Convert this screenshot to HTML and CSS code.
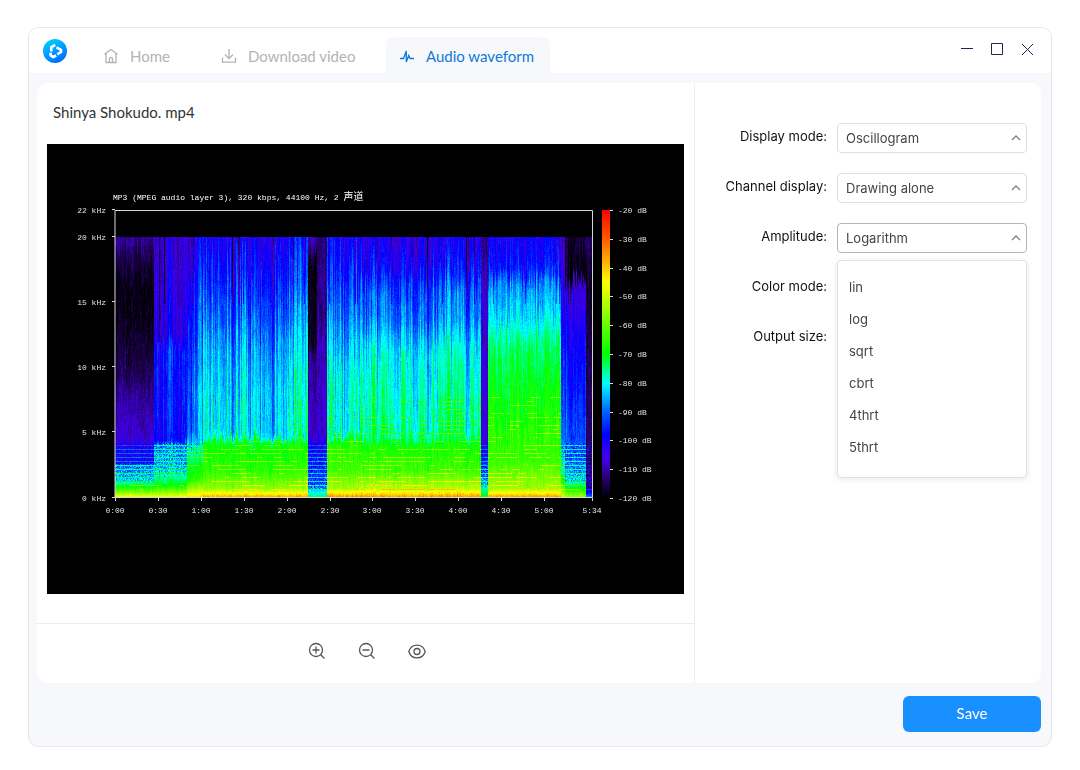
FILE: index.html
```html
<!DOCTYPE html>
<html lang="en">
<head>
<meta charset="utf-8">
<title>Audio waveform</title>
<link rel="stylesheet" href="styles.css">
</head>
<body>
<div class="window">
  <header class="titlebar">
    <svg class="logo" viewBox="0 0 24 24" aria-hidden="true">
      <defs><linearGradient id="logo-fill" x1="0.2" y1="0" x2="0.7" y2="1"><stop offset="0" stop-color="#00d2ff"/><stop offset="1" stop-color="#0068ff"/></linearGradient></defs>
      <circle cx="12" cy="12" r="12" fill="url(#logo-fill)"/>
      <g stroke="#fff" stroke-width="2.6" stroke-linejoin="round">
        <path d="M12.200 5.800 8.300 8.200V12.500"/>
        <path d="M13.500 8.300 18 10.800V13L14.300 15.300"/>
        <path d="M7.600 13.800V16.500L10.200 18.200 13.200 16.500"/>
      </g>
    </svg>
    <nav class="tabs">
      <a class="tab tab-home" href="#">
        <svg viewBox="0 0 16 16"><path d="M1.500 6.300 8 1.500l6.500 4.800M3 5.500V14.500H13V5.500M6.500 14.500V10.500Q6.500 9.500 8 9.500T9.500 10.500V14.500"/></svg>
        Home
      </a>
      <a class="tab tab-download" href="#">
        <svg viewBox="0 0 16 16"><path d="M8 1V10.500M4 6.500 8 10.500 12 6.500M1.500 9.500V14.200H14.500V9.500"/></svg>
        Download video
      </a>
      <a class="tab tab-active" href="#" aria-current="page">
        <svg viewBox="0 0 16 16"><path d="M1 10.500H4.500L7.300 3V14L9.700 7.500 11 10.500H15"/></svg>
        Audio waveform
      </a>
    </nav>
    <div class="window-controls">
      <button type="button" aria-label="Minimize"><svg viewBox="0 0 14 14"><path d="M1 6.500H13"/></svg></button>
      <button type="button" aria-label="Maximize"><svg viewBox="0 0 14 14"><path d="M1.500 1.500H12.500V12.500H1.500Z"/></svg></button>
      <button type="button" aria-label="Close"><svg viewBox="0 0 14 14"><path d="M2 2 13 13M13 2 2 13"/></svg></button>
    </div>
  </header>

  <main class="panel">
    <section class="preview">
      <h1 class="file-name">Shinya Shokudo. mp4</h1>
      <div class="stage">
        <canvas id="spectrogram" width="637" height="450"></canvas>
        <svg id="axes" viewBox="0 0 637 450">
          <defs><linearGradient id="scale" x1="0" y1="0" x2="0" y2="1">
            <stop offset="0" stop-color="#f00"/><stop offset="0.1" stop-color="#ff5a00"/><stop offset="0.2" stop-color="#ffc800"/><stop offset="0.25" stop-color="#ff0"/><stop offset="0.5" stop-color="#0f0"/><stop offset="0.6" stop-color="#0ff"/><stop offset="0.7" stop-color="#0064ff"/><stop offset="0.78" stop-color="#00f"/><stop offset="0.86" stop-color="#4600f0"/><stop offset="0.93" stop-color="#280070"/><stop offset="1" stop-color="#000"/>
          </linearGradient></defs>
          <rect x="555" y="66" width="8" height="288" fill="url(#scale)"/>
          <path class="frame" d="M68 66.500H545.500V353.500H68Z"/>
          <text class="caption" x="66" y="56">MP3 (MPEG audio layer 3), 320 kbps, 44100 Hz, 2 <tspan class="cjk">声道</tspan></text>
        </svg>
      </div>
      <div class="tools">
        <button type="button" aria-label="Zoom in"><svg viewBox="0 0 18 18"><circle cx="8" cy="8" r="6.500"/><path d="M12.700 12.700 16.500 16.500M4.500 8H11.500M8 4.500V11.500"/></svg></button>
        <button type="button" aria-label="Zoom out"><svg viewBox="0 0 18 18"><circle cx="8" cy="8" r="6.500"/><path d="M12.700 12.700 16.500 16.500M4.500 8H11.500"/></svg></button>
        <button type="button" aria-label="Preview"><svg viewBox="0 0 18 18"><path d="M.8 9.500C3.500 1 14.500 1 17.200 9.500C14.500 18 3.500 18 .8 9.500Z"/><circle cx="9" cy="9.500" r="3"/></svg></button>
      </div>
    </section>

    <form class="settings">
      <div class="field">
        <label for="display-mode">Display mode:</label>
        <div class="select"><select id="display-mode"><option>Oscillogram</option></select><svg viewBox="0 0 10 6"><path d="M1 5 5 1 9 5"/></svg></div>
      </div>
      <div class="field">
        <label for="channel">Channel display:</label>
        <div class="select"><select id="channel"><option>Drawing alone</option></select><svg viewBox="0 0 10 6"><path d="M1 5 5 1 9 5"/></svg></div>
      </div>
      <div class="field">
        <label for="amplitude">Amplitude:</label>
        <div class="select select-open"><select id="amplitude"><option>Logarithm</option></select><svg viewBox="0 0 10 6"><path d="M1 5 5 1 9 5"/></svg>
          <ul class="menu" role="listbox" aria-label="Amplitude">
            <li role="option">lin</li>
            <li role="option">log</li>
            <li role="option">sqrt</li>
            <li role="option">cbrt</li>
            <li role="option">4thrt</li>
            <li role="option">5thrt</li>
          </ul>
        </div>
      </div>
      <div class="field">
        <label for="color-mode">Color mode:</label>
        <div class="select"><select id="color-mode"></select></div>
      </div>
      <div class="field">
        <label for="output-size">Output size:</label>
        <div class="select"><select id="output-size"></select></div>
      </div>
    </form>
  </main>

  <footer class="actions"><button class="save" type="button">Save</button></footer>
</div>
<script src="spectrogram.js"></script>
</body>
</html>
```

FILE: styles.css
```css
* { box-sizing: border-box; }

body {
  margin: 0;
  min-height: 100vh;
  padding: 27px 28px 23px;
  display: flex;
  background: #fff;
  color: #333;
  font: 14px/20px Lato, "Open Sans", sans-serif;
}

button, select { font: inherit; color: inherit; }
button { border: 0; padding: 0; background: none; cursor: pointer; }
svg { display: block; fill: none; }

.window {
  flex: 1;
  min-width: 0;
  display: flex;
  flex-direction: column;
  overflow: hidden;
  border: 1px solid #e8e8ea;
  border-radius: 10px;
  background: #f6f8fc;
}

.titlebar {
  height: 45px;
  padding-left: 14px;
  display: flex;
  background: #fff;
}
.logo { width: 24px; height: 24px; margin-top: 11px; }

.tabs { display: flex; align-items: flex-end; margin-left: 22px; }
.tab {
  height: 36px;
  padding: 1px 13px 0;
  display: flex;
  align-items: center;
  gap: 11px;
  border-radius: 8px 8px 0 0;
  color: #b3b3b3;
  font-size: 15px;
  text-decoration: none;
}
.tab svg { width: 16px; height: 16px; stroke: currentColor; stroke-width: 1.3; }
.tab-home { width: 118px; padding-left: 14px; }
.tab-download { width: 179px; padding-left: 14px; }
.tab-active { width: 164px; color: #1078d8; background: #f6f8fc; }

.window-controls {
  margin: 14px 17px 0 auto;
  display: flex;
  align-items: flex-start;
  gap: 16px;
}
.window-controls svg { width: 14px; height: 14px; stroke: #1f2850; stroke-width: 1; }

.panel {
  flex: 1;
  margin: 10px 10px 0 8px;
  display: flex;
  border-radius: 10px;
  background: #fff;
}
.preview {
  flex: 1;
  min-width: 0;
  display: flex;
  flex-direction: column;
  border-right: 1px solid #eee;
}
.file-name {
  margin: 19px 16px 22px;
  font-size: 15px;
  font-weight: 400;
}
.stage { display: grid; margin: 0 10px; background: #000; }
.stage > * { grid-area: 1 / 1; width: 100%; height: auto; display: block; }
#axes text { fill: #e4e4e4; font: 8px "Liberation Mono", "Noto Sans CJK SC", monospace; white-space: pre; }
#axes .caption { fill: #fff; }
#axes .cjk { font-size: 10px; }
#axes .frame, #axes .tick { stroke: #d8d8d8; }
#axes .end { text-anchor: end; }
#axes .mid { text-anchor: middle; }

.tools {
  height: 60px;
  margin-top: auto;
  padding: 0 0 6px 3px;
  display: flex;
  align-items: center;
  justify-content: center;
  gap: 32px;
  border-top: 1px solid #ececec;
}
.tools svg { width: 18px; height: 18px; stroke: #555; stroke-width: 1.3; }

.settings {
  width: 346px;
  padding: 40px 14px;
  display: flex;
  flex-direction: column;
  gap: 20px;
  font-family: Inter, sans-serif;
  font-size: 13px;
}
.field {
  display: grid;
  grid-template-columns: 1fr 190px;
  column-gap: 10px;
  align-items: center;
}
.field label { padding-bottom: 4px; text-align: right; color: #111; }
.select { position: relative; display: grid; align-items: center; }
.select select {
  grid-area: 1 / 1;
  width: 100%;
  height: 30px;
  padding: 0 8px;
  appearance: none;
  border: 1px solid #e0e0e0;
  border-radius: 4px;
  background: #fff;
  color: #444;
}
.select > svg {
  grid-area: 1 / 1;
  justify-self: end;
  width: 10px;
  height: 6px;
  margin-right: 6px;
  stroke: #808080;
  stroke-width: 1.3;
  pointer-events: none;
}
.select-open select { border-color: #b5b5b5; }
.menu {
  position: absolute;
  z-index: 1;
  top: 37px;
  left: 0;
  right: 0;
  margin: 0;
  padding: 10px 0 14px;
  list-style: none;
  border: 1px solid #e0e0e0;
  border-radius: 4px;
  background: #fff;
  box-shadow: 0 1px 6px rgba(0, 0, 0, 0.1);
}
.menu li { padding: 6px 11px; color: #444; }

.actions { display: flex; justify-content: flex-end; padding: 13px 10px 14px; }
.save {
  width: 138px;
  height: 36px;
  padding-bottom: 2px;
  border-radius: 6px;
  background: #1890ff;
  color: #fff;
  font-size: 15px;
}
```

FILE: spectrogram.js
```js
// Axis labels and tick marks
const axes = document.getElementById("axes");
function add(name, attrs, text) {
  const el = document.createElementNS("http://www.w3.org/2000/svg", name);
  for (const key in attrs) el.setAttribute(key, attrs[key]);
  if (text) el.textContent = text;
  axes.appendChild(el);
}
[[22, 66], [20, 93], [15, 158], [10, 223], [5, 288], [0, 354]].forEach(([k, y]) => {
  add("text", { x: 59, y: y + 3, class: "end" }, k + " kHz");
  add("path", { d: `M65 ${y - 0.5}h3`, class: "tick" });
});
["0:00", "0:30", "1:00", "1:30", "2:00", "2:30", "3:00", "3:30", "4:00", "4:30", "5:00", "5:34"].forEach((t, i) => {
  const x = i === 11 ? 545 : Math.round(68 + i * 42.9);
  add("text", { x, y: 369, class: "mid" }, t);
  add("path", { d: `M${x + 0.5} 354v3`, class: "tick" });
});
for (let i = 0; i <= 10; i++) {
  const y = Math.round(66 + i * 28.8);
  add("text", { x: 571, y: y + 3 }, -20 - i * 10 + " dB");
  add("path", { d: `M563 ${y + 0.5}h3`, class: "tick" });
}

// Repeatable pseudo-random numbers
let seed = 7;
const rnd = () => {
  seed = (seed * 1664525 + 1013904223) >>> 0;
  return seed / 4294967296;
};

const palette = [[-120, 0, 0, 0], [-113, 32, 0, 90], [-106, 66, 0, 225], [-98, 0, 0, 255], [-90, 0, 100, 255],
  [-80, 0, 255, 255], [-70, 0, 255, 0], [-45, 255, 255, 0], [-40, 255, 200, 0], [-30, 255, 90, 0], [-20, 255, 0, 0]];

function lerp(points, v, channel) {
  if (v <= points[0][0]) return points[0][channel];
  for (let i = 1; i < points.length; i++) {
    if (v <= points[i][0]) {
      const a = points[i - 1], b = points[i];
      return a[channel] + (b[channel] - a[channel]) * (v - a[0]) / (b[0] - a[0]);
    }
  }
  return points[points.length - 1][channel];
}

// Passages of the track: end x, column variation, then [y, level in dB] points
const passages = [
  [107, 1, [[93, -110], [116, -115], [141, -119], [160, -119], [190, -117], [226, -114], [250, -110], [292, -107], [303, -101], [318, -99], [321, -88], [336, -82], [346, -62], [353, -44]]],
  [140, 6, [[93, -105], [186, -102], [205, -95], [260, -96], [296, -97], [300, -86], [321, -84], [341, -70], [353, -44]]],
  [156, 6, [[93, -104], [136, -98], [196, -94], [246, -89], [290, -89], [304, -78], [336, -66], [353, -42]]],
  [261, 6, [[93, -102], [130, -97], [176, -91], [201, -87], [250, -83], [292, -82], [299, -70], [326, -66], [344, -56], [353, -36]]],
  [270, 2, [[93, -108], [118, -119], [196, -118], [215, -111], [292, -107], [305, -99], [340, -92], [353, -72]]],
  [280, 2, [[93, -113], [176, -112], [215, -109], [292, -107], [305, -99], [340, -92], [353, -72]]],
  [313, 6, [[93, -101], [146, -94], [186, -88], [236, -81], [292, -80], [298, -68], [326, -64], [344, -54], [353, -34]]],
  [434, 6, [[93, -103], [126, -98], [146, -91], [176, -88], [191, -84], [208, -80], [250, -77], [292, -75], [302, -68], [326, -64], [344, -52], [353, -34]]],
  [441, 1, [[93, -111], [156, -107], [292, -105], [310, -99], [335, -88], [353, -68]]],
  [514, 4, [[93, -101], [126, -97], [141, -88], [176, -82], [201, -75], [256, -70], [316, -65], [344, -55], [353, -35]]],
  [518, 3, [[93, -107], [126, -103], [200, -96], [296, -88], [330, -74], [353, -50]]],
  [539, 4, [[93, -116], [132, -119], [139, -107], [176, -102], [216, -98], [276, -94], [316, -90], [336, -82], [353, -54]]],
  [545, 1, [[93, -112], [141, -117], [200, -114], [316, -112], [342, -110], [350, -95], [353, -85]]]
];

const ctx = document.getElementById("spectrogram").getContext("2d");
ctx.fillRect(0, 0, 637, 450);
const left = 68, top0 = 93, width = 477, height = 260;
const image = ctx.createImageData(width, height);
const rows = Array.from({ length: height }, (_, y) => y % 4 === 0);
const streaks = Array.from({ length: width }, () => rnd());
const dashes = new Array(height).fill(0);
let drift = 0;
for (let x = 0; x < width; x++) {
  const [, variation, curve] = passages.find(p => x + left < p[0]) || passages[passages.length - 1];
  drift = drift * 0.6 + (rnd() - 0.5) * 1.4;
  const jag = (rnd() - 0.5) * 1.2 + drift;
  const shift = (rnd() - 0.5) * 20;
  let patch = 0;
  for (let y = 0; y < height; y++) {
    const py = y + top0;
    const low = Math.max(0, Math.min(1, (py - 285) / 20));
    patch = patch * 0.85 + (rnd() - 0.5) * 2.4;
    let level = lerp(curve, py + shift * (1 - low), 1);
    level += jag * variation * (1 - low * 0.8) + patch + (rnd() - 0.5) * 3;
    if (variation > 3 && streaks[x] > 0.94 && py < 160) level -= 8;
    if (variation > 3 && streaks[x] < 0.05 && py < 290) level += 3;
    if (rows[y] && py > 250) {
      if (rnd() < 0.12) dashes[y] = rnd() < 0.4 ? 1 : 0;
      if (level > -78 && py < 346) level += dashes[y] * 11;
    }
    if (level < -78 && py > 298 && py < 346) level += rows[y] ? 10 : (rnd() - 0.6) * 12;
    const i = (y * width + x) * 4;
    for (let c = 0; c < 3; c++) image.data[i + c] = lerp(palette, level, c + 1);
    image.data[i + 3] = 255;
  }
}
ctx.putImageData(image, left, top0);
```
